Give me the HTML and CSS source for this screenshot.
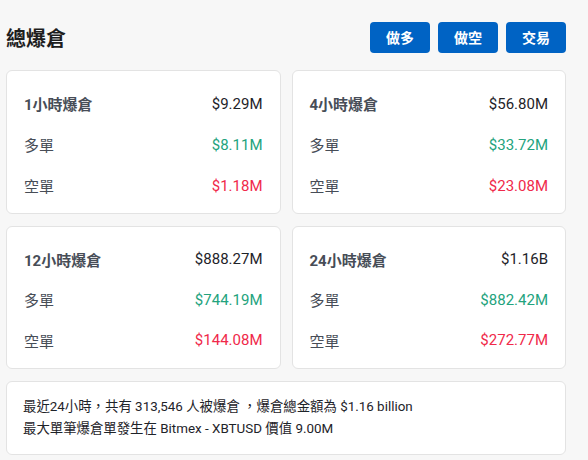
FILE: index.html
```html
<!DOCTYPE html>
<html lang="zh-Hant">
<head>
<meta charset="utf-8">
<link rel="stylesheet" href="styles.css">
</head>
<body>
<div class="page">
  <header class="header">
    <h1 class="title">總爆倉</h1>
    <div class="actions">
      <button class="btn">做多</button>
      <button class="btn">做空</button>
      <button class="btn">交易</button>
    </div>
  </header>
  <div class="grid">
    <div class="card">
      <div class="row head"><span class="label">1小時爆倉</span><span class="val">$9.29M</span></div>
      <div class="row"><span class="label">多單</span><span class="val up">$8.11M</span></div>
      <div class="row"><span class="label">空單</span><span class="val down">$1.18M</span></div>
    </div>
    <div class="card">
      <div class="row head"><span class="label">4小時爆倉</span><span class="val">$56.80M</span></div>
      <div class="row"><span class="label">多單</span><span class="val up">$33.72M</span></div>
      <div class="row"><span class="label">空單</span><span class="val down">$23.08M</span></div>
    </div>
    <div class="card">
      <div class="row head"><span class="label">12小時爆倉</span><span class="val">$888.27M</span></div>
      <div class="row"><span class="label">多單</span><span class="val up">$744.19M</span></div>
      <div class="row"><span class="label">空單</span><span class="val down">$144.08M</span></div>
    </div>
    <div class="card">
      <div class="row head"><span class="label">24小時爆倉</span><span class="val">$1.16B</span></div>
      <div class="row"><span class="label">多單</span><span class="val up">$882.42M</span></div>
      <div class="row"><span class="label">空單</span><span class="val down">$272.77M</span></div>
    </div>
  </div>
  <div class="summary">
    <p>最近24小時，共有 313,546 人被爆倉 ，爆倉總金額為 $1.16 billion</p>
    <p>最大單筆爆倉單發生在 Bitmex - XBTUSD 價值 9.00M</p>
  </div>
</div>
</body>
</html>
```

FILE: styles.css
```css
* { box-sizing: border-box; }
html, body { margin: 0; padding: 0; }
body {
  background: #f7f7f7;
  font-family: Roboto, "Noto Sans CJK TC", sans-serif;
  color: #1e2329;
}
.page {
  width: 560px;
  margin-left: 6px;
}
.header {
  height: 70px;
  display: flex;
  align-items: center;
  justify-content: space-between;
  padding-top: 4px;
}
.title {
  margin: 0;
  font-size: 20px;
  font-weight: 700;
  color: #1e1e1e;
  font-family: "Noto Sans CJK TC", sans-serif;
}
.actions {
  display: flex;
  gap: 8px;
}
.btn {
  width: 60px;
  height: 31px;
  border: none;
  border-radius: 4px;
  background: #0063c4;
  color: #fff;
  font-family: "Noto Sans CJK TC", sans-serif;
  font-size: 14px;
  font-weight: 700;
  padding: 0;
}
.grid {
  display: grid;
  grid-template-columns: 1fr 1fr;
  column-gap: 11px;
  row-gap: 12px;
}
.card {
  background: #fff;
  border: 1px solid #e3e3e3;
  border-radius: 6px;
  padding: 12px 17px 7px;
}
.row {
  height: 41px;
  display: flex;
  align-items: center;
  justify-content: space-between;
  font-size: 15px;
}
.grid .card:nth-child(n+3) .row { height: 40.5px; }
.label { color: #474d57; }
.head .label { font-weight: 700; }
.val { color: #1e2329; }
.up { color: #23a37d; }
.down { color: #f0294a; }
.summary {
  margin-top: 12px;
  background: #fff;
  border: 1px solid #e3e3e3;
  border-radius: 6px;
  padding: 14px 16px;
  font-size: 13.4px;
  line-height: 22px;
  color: #1e2329;
}
.summary p { margin: 0; }
```
